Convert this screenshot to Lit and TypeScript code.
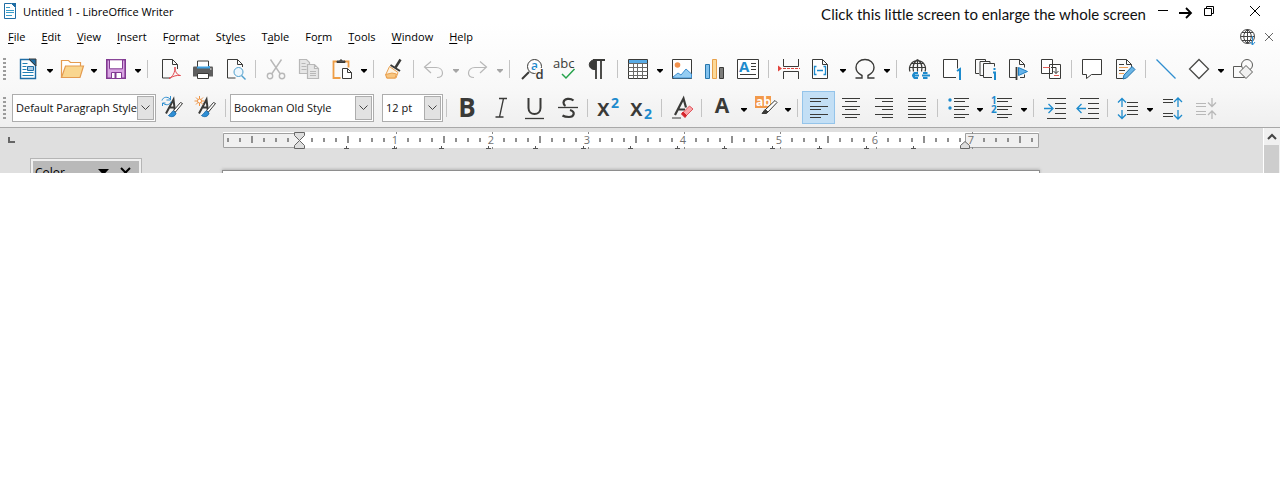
import { LitElement, html, svg, css, nothing, TemplateResult } from "lit";
import { customElement, property } from "lit/decorators.js";

const INK = "#3a3a38";
const BLUE = "#1e8bcd";
const OFF = "#b8b8b8";

const textLines = (rows: number[][], color = INK) =>
  rows.map(([x, y, w]) => svg`<path d="M${x} ${y}.5h${w}" stroke=${color}/>`);

const aGlyph = svg`<path d="M4 15.500L11.500 1.500L13 14M7 9.500h5.500" stroke-width="2"/><path d="M20.500 5.500l-7 8.500-2-1.500 7-8z" fill="#fff"/><path d="M11.500 13c-2 0-2 3-5 4.500 2 2 7 1.500 7.500-2.500z" fill="#2f8fd5" stroke="#1c6fb0"/>`;

const icons: Record<string, unknown> = {
  newdoc: svg`<path d="M2.500.5h9l6 6v13h-15z" fill="#fff" stroke="#1f6da5" stroke-width="1.400"/><path d="M11 0h7v7z" fill="#1f6da5"/><path d="M4.500 4.500h5M4.500 7.500h4M4.500 10.500h4M4.500 13.500h11M4.500 16.500h11" stroke="#1f7fb5"/><path d="M9.500 7.500h6v4h-6z" fill="#aacbe4" stroke="#1f6da5"/>`,
  open: svg`<path d="M-.5 18.500v-17h7l2 2h10v4" fill="#fff" stroke="#e49b50" stroke-width="1.200"/><path d="M-.5 18.500l4-11.500h18l-3.500 11.500z" fill="#f9d68f" stroke="#e49b50" stroke-width="1.200"/>`,
  save: svg`<path d="M.8.8h18.400v18.400h-18.400z" fill="#d9a5e3" stroke="#823a92" stroke-width="1.600"/><path d="M3.500.8h13v9h-13z" fill="#fff" stroke="#823a92"/><path d="M5.500 13.500h10v6h-10z" fill="#fff" stroke="#823a92"/><path d="M9.500 14v5" stroke="#823a92" stroke-width="2"/>`,
  pdf: svg`<path d="M17.500 10v-4.500l-5-5h-10v18.500h8M12.500.5v5h5"/><path d="M9 19.500c4-2 6-6 6-11.500 0 5 2 8 5.500 8.500-4-.5-7 .5-11.500 3" stroke="#e2494f"/>`,
  print: svg`<path d="M0 8.500q0-1 1-1h18q1 0 1 1v9h-20z" fill="#5e5e5e" stroke="none"/><path d="M4.500 8v-6h11v6" fill="#fff"/><path d="M4 8.500h12v-1.500" stroke="#3fa0e0" stroke-width="2"/><path d="M4.500 14.500h11v5h-11z" fill="#fff"/><path d="M17 10h1.500" stroke="#fff"/>`,
  preview: svg`<path d="M17.500 8v-2.500l-5-5h-10v18.500h8M12.500.5v5h5"/><circle cx="13.500" cy="13" r="4.500" fill="#eef7fd" stroke="#4f9fce"/><path d="M16.500 16.500l4 4" stroke="#4f9fce" stroke-width="1.400"/>`,
  cut: svg`<g stroke=${OFF} stroke-width="1.400"><path d="M4.500.5l9.500 14M15.500.5l-9.500 14"/><circle cx="4" cy="17" r="2.700"/><circle cx="16" cy="17" r="2.700"/></g>`,
  copy: svg`<g stroke=${OFF} fill="#e6e6e6" stroke-width="1.200"><path d="M.5.5h7l3 3v11h-10zM2.500 4.500h4M2.500 7.500h5M2.500 10.500h5"/><path d="M8.500 5.500h7l4 4v10h-11zM15.500 5.500v4h4M11 12.500h6M11 14.500h6M11 16.500h6"/></g>`,
  paste: svg`<path d="M5 2.500h-3.500v16.500h7M12 2.500h4.500v6" stroke="#ee9d45" stroke-width="1.800"/><path d="M5 3.500h8v-1.500h-2.500q-1.500-3-3 0H5z" fill="#505050"/><path d="M10.500 9.500h5l4 4v6h-9zM15.500 9.500v4h4" fill="#fff"/>`,
  brush: svg`<path d="M16.500.5l-5 8" stroke-width="2.500"/><path d="M6.500 6l9.500 6" stroke-width="2"/><path d="M5.500 7.500l8.500 6-2 5.500h-9.500l-.5-4z" fill="#fdf3e2" stroke="#e9a04f"/><path d="M1.500 15.500l6.500-1.500 4.500 1-1.500 4h-8z" fill="#f8c680" stroke="#e9a04f"/>`,
  undo: svg`<path d="M7 2.500l-6.500 5.500 6.500 6M1 8.500h11c4 0 6.500 2.500 6.500 5.500s-2.500 4.500-5.500 4.500" stroke=${OFF} stroke-width="1.200"/>`,
  redo: svg`<path d="M12 2.500l6.500 5.500-6.500 6M18 8.500h-11c-4 0-6.500 2.500-6.500 5.500s2.500 4.500 5.500 4.500" stroke=${OFF} stroke-width="1.200"/>`,
  find: svg`<circle cx="12.500" cy="7.500" r="7" fill="#fff"/><path d="M7 13l-7 7" stroke-width="2"/><text x="9" y="11" class="g blue semi" font-size="12">a</text><rect x="13.500" y="9" width="8" height="12" fill="#fafafa" stroke="none"/><text x="13.500" y="20" class="g semi" font-size="13">d</text>`,
  abc: svg`<text x="-2" y="9" class="g" font-size="13">abc</text><path d="M7 15l4 4 8.500-9" stroke="#27a34d" stroke-width="1.500"/>`,
  pilcrow: svg`<path d="M9 1h-2a4.500 4.500 0 0 0 0 9.500h2z" fill=${INK}/><path d="M6 1h12M9 1v19M14 1v19" stroke-width="1.800"/>`,
  table: svg`<path d="M.5.500h19v19h-19z" fill="#fff"/><path d="M1 1h18v3h-18z" fill="#59abe5" stroke="none"/><path d="M.5 4.500h19M.5 8.500h19M.5 12.500h19M.5 16.500h19M5.500 4.500v15M9.500 4.500v15M14.500 4.500v15" stroke="#6a6a68"/>`,
  image: svg`<path d="M.5.500h19v19h-19z" fill="#fff"/><circle cx="5.500" cy="6" r="2.800" fill="#f2914c" stroke="none"/><path d="M1 18l5-4 3 2 5-6 5.500 5v4h-18z" fill="#94cdf3" stroke="#3f8fd0"/>`,
  chart: svg`<path d="M.5 5.500h4v14h-4z" fill="#80c1ee" stroke="#2877ac"/><path d="M7.500.5h4v19h-4z" fill="#fbd999" stroke="#e8a14a"/><path d="M14.500 8.500h4v11h-4z" fill="#7d7d7b"/>`,
  textbox: svg`<path d="M-.5.500h21v19h-21z" fill="#fff"/><text x="1" y="13" class="g blue bold" font-size="15">A</text>${textLines([[13, 4, 5], [13, 7, 5], [13, 10, 5], [2, 15, 16]])}`,
  pagebreak: svg`<path d="M4.500 0v7.500h15v-7.500M4.500 20v-7.500h15v7.500"/><path d="M-1 6.500l4 3-4 3z" fill="#e2453e" stroke="none"/><path d="M4 9.500h17" stroke="#e2453e" stroke-dasharray="3 1"/>`,
  field: svg`<path d="M1.500.5h10l5 5v14h-15zM11.500.5v5h5" fill="#fff"/><path d="M5.500 7.500h-2v8h2M12.500 7.500h2v8h-2M6 11.500h6" stroke=${BLUE} stroke-width="1.300"/>`,
  omega: svg`<path d="M.5 19h6.500v-2.500c-4-2-6-4.500-6-8 0-4.500 4-8 9-8s9 3.500 9 8c0 3.500-2 6-6 8v2.500h6.500" stroke-width="1.400"/>`,
  link: svg`<path d="M1 12.500a8 8 0 1 1 15 0M8.500.5v12M8.500.5c-5 4-5 8-4 12M8.500.5c5 4 5 8 4 12M1 8.500h15M2.500 4.500h12" stroke-width="1.200"/><path d="M9 14h-3.500q-2.500 2.500 0 5h3.500M14 14h4.500M14 19h4.500M3 16.500h7M13 16.500h8" stroke=${BLUE} stroke-width="2"/>`,
  footnote: svg`<path d="M14 18.500h-12.500v-18h14v9" fill="#fff"/><path d="M15 12l3-2v11" stroke=${BLUE} stroke-width="2"/>`,
  endnote: svg`<path d="M4 14.500h-3.500v-14h10v2M8 16.500h-3v-14h10v2M17 18.500h-8.500v-14h11v3"/><path d="M19.500 9v2M18 13.500h2v7.500" stroke=${BLUE} stroke-width="2"/>`,
  bookmark: svg`<path d="M8 18.500h-6.500v-18h10l5 5v3M11.500.5v5h5M12 18.500h4.500v-3"/><path d="M8.500 8v13" stroke-width="1.800"/><path d="M10.500 8.500l9 4-9 4z" fill="#67b3ea" stroke="#1f7fc0"/>`,
  crossref: svg`<path d="M.5.500h11v14h-11zM8.500 5.500h11v14h-11z" fill="#fff"/><path d="M2 8.500h7" stroke="#e2605a"/><path d="M13 16.500h5" stroke="#e2605a"/><path d="M10 8.500h5v6M12.500 12l2.500 2.500 2.500-2.500"/>`,
  comment: svg`<path d="M.5.500h19v15h-10l-5 4v-4h-4z" fill="#fff"/>`,
  track: svg`<path d="M9 19.500h-7.500v-19h10l5 5v4M11.500.5v5h5"/>${textLines([[4, 5, 5], [4, 11, 6]])}<path d="M4 8.500h9M4 14.500h5" stroke="#ee9f55"/><path d="M8 20l1-4 8-8.500 3 3-8.500 8.500z" fill="#6bb5e6" stroke="#1f73ae"/>`,
  line: svg`<path d="M.5.500l19 19" stroke="#2f8ed0" stroke-width="1.200"/>`,
  diamond: svg`<path d="M10 .5l9.500 9.500-9.500 9.500-9.500-9.500z" fill="#fff" stroke="#4a4a48" stroke-width="1.300"/>`,
  shapes: svg`<g stroke="#5a5a58" fill="#fafafa"><path d="M.5 7.500h11v11h-11z"/><circle cx="14" cy="6" r="5.500"/><path d="M13 6.500l6.500 6.500-6.500 6.500-6.500-6.500z" fill="#f0f0f0"/></g>`,
  styleUpdate: svg`${aGlyph}<path d="M0 2.500c1-4 6-4 8-1.500M8.500-2v4h-4M9 3.500c-1 4-6 4-8 1.500M.5 8v-3h3" stroke="#2f8fd0"/>`,
  styleNew: svg`${aGlyph}<path d="M4.500-2v10M-.5 3h10M1-.5l7 7M8-.5l-7 7" stroke="#ee9445"/><circle cx="4.500" cy="3" r="2" fill="#fff" stroke="#ee9445"/>`,
  bold: svg`<text x="8" y="19" text-anchor="middle" class="g bold" font-size="26">B</text>`,
  italic: svg`<path d="M8 .5h8M4.500 19h8M12.500.5l-4 18.500" stroke-width="1.300"/>`,
  underline: svg`<path d="M4.500 0v10c0 8 12 8 12 0v-10" stroke-width="2"/><path d="M1 20.500h19" stroke-width="1.300"/>`,
  strike: svg`<path d="M16.500 2.500c-3-2.500-9.500-2.500-10 2 0 2 1 3 2 3.500M13 12c6 2 4 7-1 7-3 0-5-.5-6.500-1.500" stroke-width="2.200"/><path d="M1 9.500h20" stroke-width="1.300"/>`,
  sup: svg`<text x="-1" y="17.500" class="g semi" font-size="23">x</text><text x="13" y="10" class="g blue bold" font-size="14">2</text>`,
  sub: svg`<text x="-1" y="17.500" class="g semi" font-size="23">x</text><text x="13" y="21" class="g blue bold" font-size="14">2</text>`,
  clear: svg`<path d="M3 17l8.500-16.500 2.500 9M6 11.500h7" stroke-width="2.200"/><path d="M0 20h9"/><path d="M10.500 15l7-7 3.500 3-7.500 7.500z" fill="#f8a4a8" stroke="#e0555c"/><path d="M9.500 16l3.500 3.500 1.500-2-3.500-3.500z" fill="#d5252c" stroke="#d5252c"/>`,
  fontColor: svg`<text x="10" y="15" text-anchor="middle" class="g bold" font-size="21">A</text>`,
  highlight: svg`<rect x="-1" y="-2" width="16" height="12" fill="#f2994a" stroke="none"/><text x="0" y="8" class="g white bold" font-size="12">ab</text><path d="M19 2.500l2 2-9 9.500-3-2z" fill="#fff"/><path d="M6 15.500l3-4 3 2.500-1.500 1.500z" fill=${INK}/>`,
  left: textLines([[1, 0, 18], [1, 3, 11], [1, 8, 18], [1, 11, 11], [1, 16, 18], [1, 19, 11]]),
  center: textLines([[1, 0, 18], [4, 3, 12], [1, 8, 18], [4, 11, 12], [1, 16, 18], [4, 19, 12]]),
  right: textLines([[1, 0, 18], [8, 3, 11], [1, 8, 18], [8, 11, 11], [1, 16, 18], [8, 19, 11]]),
  justify: textLines([[1, 0, 18], [1, 3, 18], [1, 8, 18], [1, 11, 18], [1, 16, 18], [1, 19, 18]]),
  bullets: svg`${textLines([[6, 0, 15], [6, 3, 11], [6, 8, 15], [6, 11, 11], [6, 16, 15], [6, 19, 11]])}<circle cx="2" cy="2" r="1.700" fill=${BLUE} stroke="none"/><circle cx="2" cy="10" r="1.700" fill=${BLUE} stroke="none"/>`,
  numbers: svg`${textLines([[5, 0, 15], [5, 3, 11], [5, 8, 15], [5, 11, 11], [5, 16, 15], [5, 19, 11]])}<text class="g blue bold" font-size="10"><tspan x="-1" y="6">1</tspan><tspan x="-1" y="15">2</tspan></text>`,
  indent: svg`${textLines([[3, 0, 19], [11, 5, 11], [11, 10, 11], [11, 15, 11], [3, 20, 19]])}<path d="M0 10.500h8M4.500 6l4.500 4.500-4.500 4.500" stroke=${BLUE} stroke-width="1.300"/>`,
  outdent: svg`${textLines([[3, 0, 19], [11, 5, 11], [11, 10, 11], [11, 15, 11], [3, 20, 19]])}<path d="M1 10.500h8M4.500 6l-4.500 4.500 4.500 4.500" stroke=${BLUE} stroke-width="1.300"/>`,
  lineSpace: svg`${textLines([[9, 4, 11], [9, 8, 11], [9, 12, 11], [9, 16, 11]])}<path d="M4 9v-8M0 4.500l4-4 4 4M4 12v8M0 16.500l4 4 4-4" stroke=${BLUE} stroke-width="1.300"/>`,
  paraMore: svg`${textLines([[1, 1, 10], [1, 4, 10], [1, 15, 10], [1, 18, 10]])}<path d="M16 9v-9M12 4l4-4 4 4M16 12v9M12 17l4 4 4-4" stroke=${BLUE} stroke-width="1.300"/>`,
  paraLess: svg`${textLines([[1, 5, 10], [1, 8, 10], [1, 13, 10], [1, 16, 10]], OFF)}<path d="M17 0v8M13 4.500l4 4 4-4M17 21v-8M13 17l4-4 4 4" stroke=${OFF} stroke-width="1.300"/>`,
};

type Item = { icon?: string; label?: string; menu?: boolean; off?: boolean; on?: boolean; narrow?: boolean; sep?: "thin" | "wide" };
const b = (icon: string, label: string, more: Partial<Item> = {}): Item => ({ icon, label, ...more });
const sep = (size: "thin" | "wide" = "thin"): Item => ({ sep: size });
const menu = { menu: true };

const standardBar: Item[] = [
  b("newdoc", "New", menu), b("open", "Open", menu), b("save", "Save", menu), sep("wide"),
  b("pdf", "Export as PDF"), b("print", "Print", { narrow: true }), b("preview", "Print Preview"), sep(),
  b("cut", "Cut", { off: true }), b("copy", "Copy", { off: true }), b("paste", "Paste", menu), sep(),
  b("brush", "Clone Formatting", { narrow: true }), sep(),
  b("undo", "Undo", { menu: true, off: true }), b("redo", "Redo", { menu: true, off: true }), sep("wide"),
  b("find", "Find and Replace"), b("abc", "Spelling", { narrow: true }), b("pilcrow", "Formatting Marks"), sep(),
  b("table", "Insert Table", menu), b("image", "Insert Image"), b("chart", "Insert Chart"), b("textbox", "Insert Text Box"), sep(),
  b("pagebreak", "Insert Page Break", { narrow: true }), b("field", "Insert Field", menu), b("omega", "Special Character", menu), sep("wide"),
  b("link", "Insert Hyperlink"), b("footnote", "Insert Footnote"), b("endnote", "Insert Endnote"), b("bookmark", "Insert Bookmark"), b("crossref", "Insert Cross-reference"), sep(),
  b("comment", "Insert Comment"), b("track", "Track Changes"), sep(),
  b("line", "Insert Line"), b("diamond", "Basic Shapes", menu), b("shapes", "Show Draw Functions"),
];

const charBar: Item[] = [
  sep("wide"), b("bold", "Bold", { narrow: true }), b("italic", "Italic"), b("underline", "Underline"), b("strike", "Strikethrough"), sep(),
  b("sup", "Superscript"), b("sub", "Subscript"), sep(), b("clear", "Clear Formatting", { narrow: true }), sep(),
  b("fontColor", "Font Color", menu), b("highlight", "Highlighting", menu), sep(),
  b("left", "Align Left", { on: true }), b("center", "Center"), b("right", "Align Right"), b("justify", "Justified"), sep(),
  b("bullets", "Bullets", menu), b("numbers", "Numbering", menu), sep(),
  b("indent", "Increase Indent"), b("outdent", "Decrease Indent"), sep(),
  b("lineSpace", "Line Spacing", menu), b("paraMore", "Increase Paragraph Spacing"), b("paraLess", "Decrease Paragraph Spacing", { off: true }),
];

@customElement("tool-items")
class ToolItems extends LitElement {
  @property({ attribute: false }) items: Item[] = [];

  static styles = css`
    :host { display: flex; align-items: center; flex: none; }
    button { border: 1px solid transparent; background: none; padding: 0; margin: 0; display: flex; align-items: center; justify-content: center; flex: none; height: 33px; box-sizing: border-box; }
    .main { width: 32px; margin-right: 1px; }
    .main.narrow, .main.split { margin-right: 0; }
    .main.on { width: 33px; margin-right: 0; background: #c3dff5; border-color: #94c4ea; }
    .drop { width: 12px; }
    .icon { width: 20px; height: 20px; overflow: visible; fill: none; stroke: #3a3a38; flex: none; }
    .arrow { width: 6px; height: 4px; margin-top: 4px; fill: #000; flex: none; }
    .arrow.off { fill: #a5a5a5; }
    .sep { height: 18px; width: 1px; background: #c4c4c4; margin: 0 4px 0 3px; flex: none; }
    .sep.wide { margin-right: 6px; }
    .g { font-family: "Open Sans", sans-serif; fill: #3a3a38; stroke: none; }
    .g.blue { fill: #1e8bcd; }
    .g.white { fill: #fff; }
    .semi { font-weight: 600; }
    .bold { font-weight: 700; }
  `;

  private item(i: Item): TemplateResult {
    if (i.sep) return html`<span class="sep ${i.sep}"></span>`;
    return html`<button class="main ${i.menu ? "split" : ""} ${i.on ? "on" : ""} ${i.narrow ? "narrow" : ""}" aria-label=${i.label!} ?disabled=${i.off}>
        <svg class="icon" viewBox="0 0 20 20" aria-hidden="true">${icons[i.icon!]}</svg>
      </button>${i.menu
        ? html`<button class="drop" aria-label="${i.label} options" ?disabled=${i.off}><svg class="arrow ${i.off ? "off" : ""}" viewBox="0 0 6 4"><path d="M0 0h6v1l-3 3-3-3z" /></svg></button>`
        : nothing}`;
  }

  render() { return this.items.map((i) => this.item(i)); }
}

@customElement("combo-box")
class ComboBox extends LitElement {
  @property() label = "";
  @property() value = "";

  static styles = css`
    :host { display: block; position: relative; height: 28px; box-sizing: border-box; flex: none; }
    select { appearance: none; width: 100%; height: 100%; box-sizing: border-box; border: 1px solid #adadad; border-radius: 0; background: #fff; color: #111; font: 11px "Open Sans", sans-serif; padding: 0 0 0 3px; margin: 0; display: block; opacity: 1; }
    .chevron { position: absolute; top: 2px; right: 2px; width: 17px; height: 24px; box-sizing: border-box; border: 1px solid #adadad; background: #e2e2e2; pointer-events: none; display: flex; align-items: center; justify-content: center; }
    svg { width: 9px; height: 5px; fill: none; stroke: #444; flex: none; }
  `;

  render() {
    return html`<select aria-label=${this.label}><option>${this.value}</option></select>
      <span class="chevron"><svg viewBox="0 0 9 5"><path d="M.5.500l4 4 4-4" /></svg></span>`;
  }
}

const ZERO = 77;

@customElement("page-ruler")
class PageRuler extends LitElement {
  static styles = css`
    :host { display: block; flex: none; }
    svg { display: block; width: 816px; height: 17px; overflow: visible; }
    text { font: 11px "Open Sans", sans-serif; fill: #707070; }
  `;

  render() {
    const ticks = [];
    for (let k = -6; k <= 61; k++) {
      const x = ZERO + k * 12;
      if (k === 0) continue;
      if (k % 8 === 0) {
        ticks.push(svg`<text x=${x - 1} y="12" text-anchor="middle">${k / 8}</text><path d="M${x}.500 0v2M${x}.500 15v2" stroke="#888"/>`);
      } else {
        const tall = k % 4 === 0;
        ticks.push(svg`<rect x=${x - 1} y=${tall ? 4 : 6} width="2" height=${tall ? 7 : 4} fill="#8f8f8f"/>`);
      }
    }
    const tabs = [];
    for (let n = 1; n <= 13; n++) {
      const x = Math.round(ZERO + n * 47.25 - 1);
      tabs.push(svg`<path d="M${x - 2} 16.500h5M${x}.500 14v2" stroke="#555"/>`);
    }
    return html`<svg viewBox="0 0 816 17" role="img" aria-label="Ruler">
      <rect width="816" height="16" fill="#fff" />
      <path d="M.5 1.500h76v14h-76zM742.500 1.500h73v14h-73z" fill="#f0f0f0" stroke="#a0a0a0" />
      ${ticks}${tabs}
      <path d="M71.500.500h10v3l-5 5-5-5zM71.500 16.500h10v-3l-5-5-5 5zM737.500 16.500h9v-3l-4.500-4-4.500 4z" fill="#dedede" stroke="#666" />
    </svg>`;
  }
}

const menus: [string, string, string][] = [
  ["", "F", "ile"], ["", "E", "dit"], ["", "V", "iew"], ["", "I", "nsert"], ["F", "o", "rmat"], ["St", "y", "les"],
  ["T", "a", "ble"], ["Fo", "r", "m"], ["", "T", "ools"], ["", "W", "indow"], ["", "H", "elp"],
];

@customElement("app-root")
class AppRoot extends LitElement {
  static styles = css`
    :host { display: block; overflow: hidden; font: 11px "Open Sans", sans-serif; color: #000; background: #fff; }
    button { border: 0; background: none; padding: 0; margin: 0; font: inherit; color: inherit; display: flex; align-items: center; justify-content: center; }
    svg { fill: none; stroke: #000; overflow: visible; flex: none; }
    .chrome { background: linear-gradient(#fff 24px, #fbfbfb 60px, #f8f8f8 88px, #efefef 127px); border-bottom: 1px solid #a8a8a8; }
    .title { display: flex; height: 24px; align-items: center; padding-left: 4px; box-sizing: border-box; padding-bottom: 2px; }
    .logo { width: 12px; height: 16px; margin-right: 7px; }
    .name { flex: 1; font-weight: 400; margin: 0; font-size: 11px; white-space: nowrap; }
    .hint { font: 15px Lato, sans-serif; white-space: nowrap; margin: 5px 4px 0 0; color: #111; }
    .min { width: 26px; height: 22px; }
    .pointer { width: 18px; display: flex; justify-content: center; padding-top: 4px; }
    .restore { width: 30px; height: 22px; }
    .close { width: 50px; height: 22px; margin-left: 6px; }
    .menus { display: flex; height: 26px; align-items: center; padding: 0 7px 0 8px; }
    .list { display: flex; flex: 1; gap: 16px; }
    .list button { line-height: 16px; white-space: nowrap; }
    u { text-underline-offset: 2px; }
    .globe { margin-right: 9px; }
    .bar { display: flex; height: 38px; align-items: center; padding-left: 3px; }
    .format { height: 39px; }
    .grip { width: 3px; height: 22px; margin-right: 6px; flex: none; background: repeating-linear-gradient(#9c9c9c 0 2px, transparent 2px 4px); }
    .standard { margin-left: 0; }
    .wide { width: 144px; }
    .size { width: 61px; margin-left: 8px; }
    .work { display: flex; height: 45px; overflow: hidden; background: #dfdfdf; position: relative; }
    .canvas { flex: 1; display: flex; flex-direction: column; align-items: center; padding: 4px 2px 0 0; gap: 21px; min-width: 0; }
    .page { width: 818px; height: 8px; flex: none; box-sizing: border-box; background: #fff; border: 1px solid #8e8e8e; box-shadow: 0 -1px 3px #b4b4b4; }
    .tab { position: absolute; left: 8px; top: 9px; width: 5px; height: 4px; border: solid #666; border-width: 0 0 2px 2px; }
    .panel { position: absolute; left: 30px; top: 30px; width: 112px; height: 40px; box-sizing: border-box; border: 1px solid #b5b5b5; background: #f0f0f0; padding: 2px; }
    .head { display: flex; align-items: center; height: 22px; background: #b9b9b9; padding: 0 9px 0 2px; gap: 12px; font-size: 12px; }
    .head h2 { flex: 1; font: inherit; margin: 0; }
    .scroll { width: 17px; background: #f0f0f0; border-left: 1px solid #fff; box-sizing: border-box; display: flex; flex-direction: column; }
    .scroll button { height: 17px; flex: none; }
    .thumb { flex: 1; background: #cdcdcd; margin-right: 1px; }
  `;

  render() {
    return html`
      <header class="chrome">
        <div class="title">
          <svg class="logo" viewBox="0 0 12 16"><path d="M.5.500h7l4 4v11h-11z" fill="#fff" stroke="#1f6da5" /><path d="M7 0h5v5z" fill="#1f6da5" stroke="none" /><path d="M2 4.500h4M2 7.500h8M2 9.500h8M2 12.500h6" stroke="#3a9cc8" /></svg>
          <h1 class="name">Untitled 1 - LibreOffice Writer</h1>
          <span class="hint">Click this little screen to enlarge the whole screen</span>
          <button class="min" aria-label="Minimize"><svg width="10" height="10"><path d="M0 4.500h10" /></svg></button>
          <span class="pointer"><svg width="13" height="10"><path d="M0 5h12M7 0l5 5-5 5" stroke-width="1.800" /></svg></span>
          <button class="restore" aria-label="Restore"><svg width="10" height="10"><path d="M.5 2.500h7v7h-7zM2.500 2.500v-2h7v7h-2" /></svg></button>
          <button class="close" aria-label="Close"><svg width="10" height="10"><path d="M0 0l10 10M10 0l-10 10" /></svg></button>
        </div>
        <nav class="menus">
          <div class="list">${menus.map(([a, k, z]) => html`<button><span>${a}<u>${k}</u>${z}</span></button>`)}</div>
          <button class="globe" aria-label="Update available"><svg width="16" height="16"><g stroke="#444"><circle cx="7.500" cy="7.500" r="7" /><path d="M7.500.5v14M7.500.5c-5 4-5 10 0 14M7.500.5c5 4 5 10 0 14M.5 7.500h14M2 3.500h11M2 11.500h11" /></g><path d="M12.500 7v9M10 13l2.500 3 2.500-3" stroke="#2f8ed0" /></svg></button>
          <button aria-label="Close document"><svg width="8" height="8"><path d="M0 0l8 8M8 0l-8 8" stroke="#666" /></svg></button>
        </nav>
        <div class="bar"><span class="grip"></span><tool-items .items=${standardBar}></tool-items></div>
        <div class="bar format">
          <span class="grip"></span>
          <combo-box class="wide" label="Paragraph Style" value="Default Paragraph Style"></combo-box>
          <tool-items .items=${[b("styleUpdate", "Update Style"), b("styleNew", "New Style"), sep()]}></tool-items>
          <combo-box class="wide" label="Font Name" value="Bookman Old Style"></combo-box>
          <combo-box class="size" label="Font Size" value="12 pt"></combo-box>
          <tool-items .items=${charBar}></tool-items>
        </div>
      </header>
      <main class="work">
        <div class="canvas"><page-ruler></page-ruler><div class="page"></div></div>
        <div class="scroll">
          <button aria-label="Scroll up"><svg width="8" height="5"><path d="M0 5l4-4 4 4" stroke="#444" stroke-width="2" /></svg></button>
          <div class="thumb"></div>
        </div>
        <span class="tab"></span>
        <aside class="panel">
          <div class="head"><h2>Color</h2>
            <button aria-label="Panel menu"><svg width="11" height="6"><path d="M0 0h11l-5.500 6z" fill="#000" stroke="none" /></svg></button>
            <button aria-label="Close panel"><svg width="9" height="9"><path d="M0 0l9 9M9 0l-9 9" stroke-width="2" /></svg></button>
          </div>
        </aside>
      </main>`;
  }
}
